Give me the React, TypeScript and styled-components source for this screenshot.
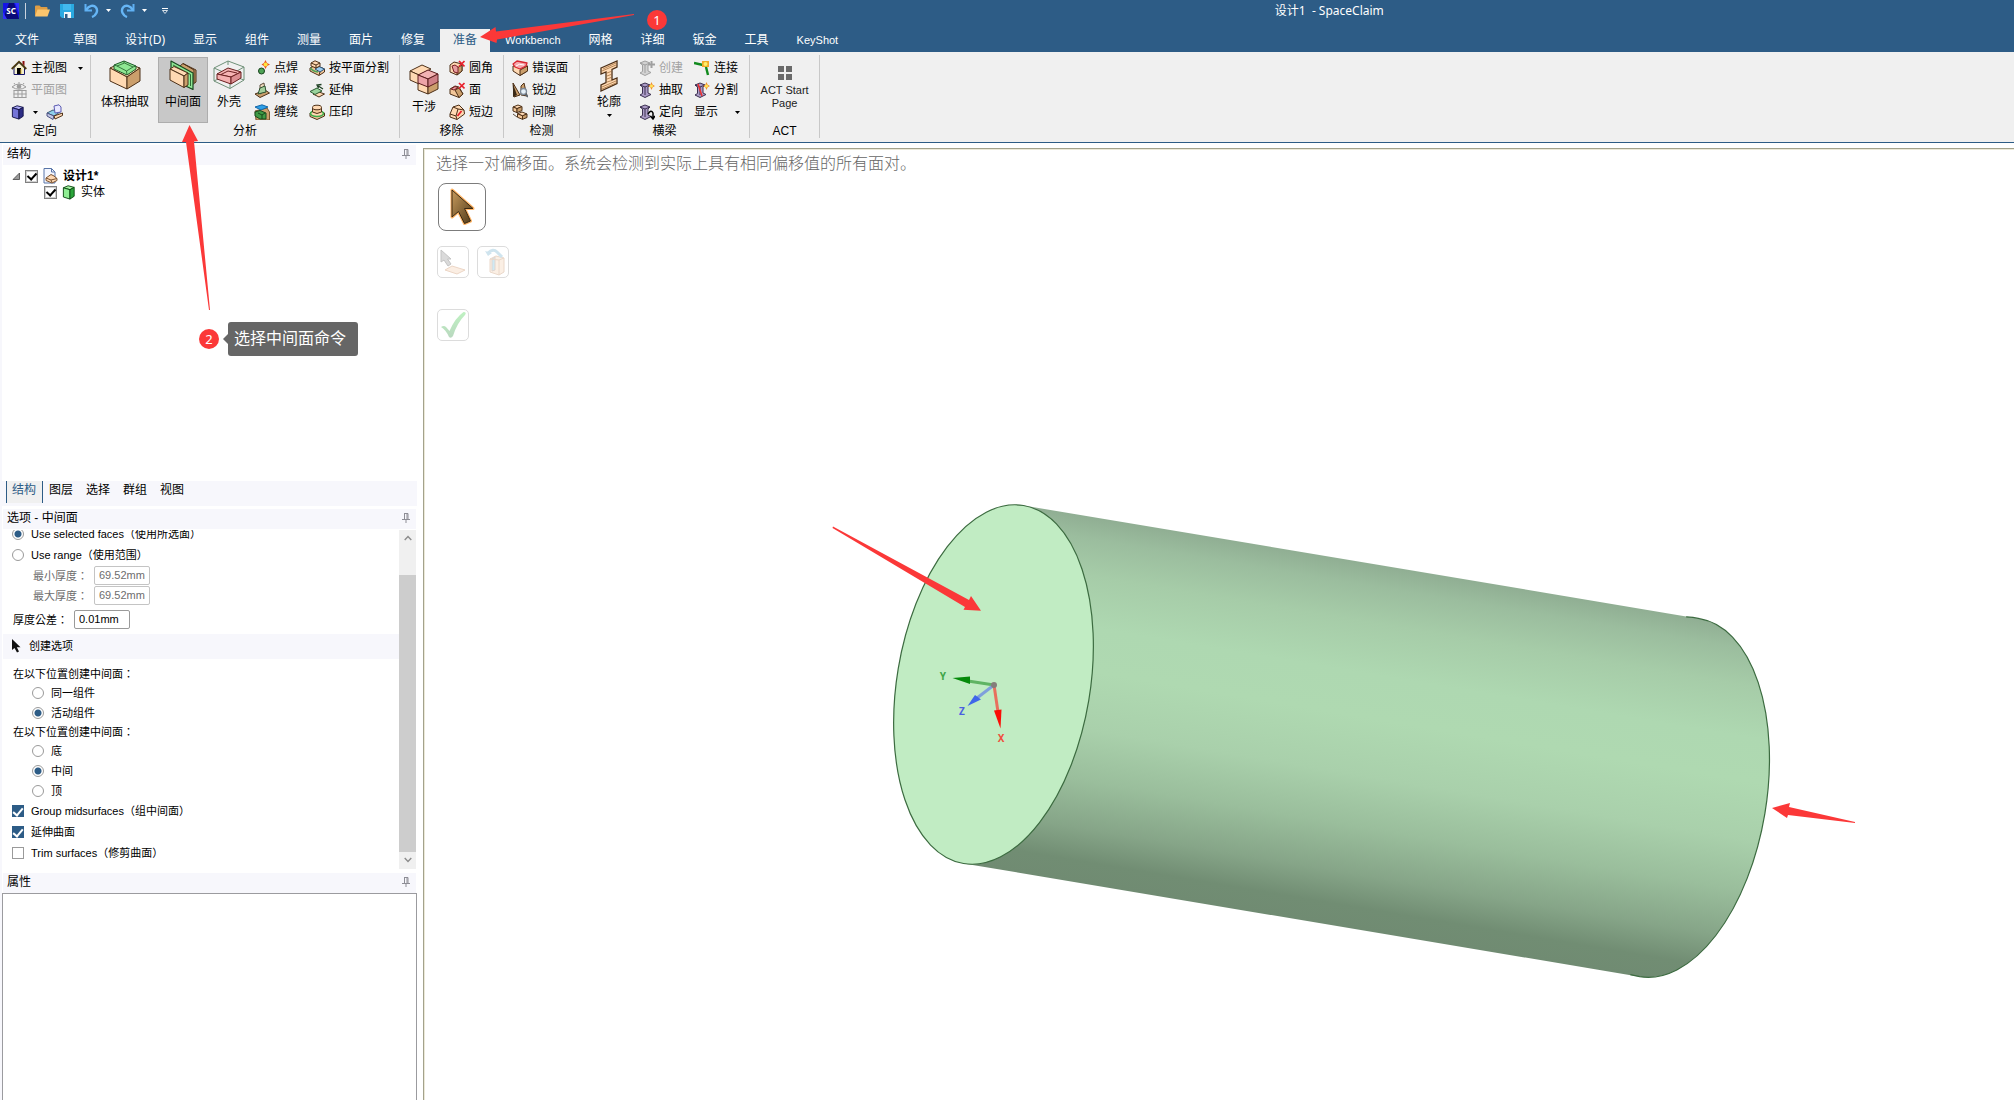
import React from "react";
import styled, { createGlobalStyle, css } from "styled-components";

const BLUE = "#2d5c86";
const LAVENDER = "#f7f7fc";
const RED = "#fb3838";
const SANS = `"Liberation Sans", "Noto Sans CJK SC", sans-serif`;
const HUMAN = `"Noto Sans", "Noto Sans CJK SC", sans-serif`;

const GlobalStyle = createGlobalStyle`
  * { box-sizing: border-box; }
  body { margin: 0; background: #fff; color: #000; font: 12px/16px ${SANS}; overflow: hidden; }
  button, input { font: inherit; color: inherit; }
`;

/* ---------- shell ---------- */

const Shell = styled.div`
  display: flex;
  flex-direction: column;
  height: 100vh;
  position: relative;
`;

const plainButton = css`
  display: flex;
  align-items: center;
  border: 0;
  margin: 0;
  padding: 0;
  background: none;
  white-space: nowrap;
`;

const TitleBar = styled.header`
  display: flex;
  align-items: center;
  height: 22px;
  padding: 0 3px 1px;
  background: ${BLUE};
  color: #fff;
`;

const QuickButton = styled.button<{ $gap?: number }>`
  ${plainButton}
  margin-left: ${(p) => p.$gap ?? 0}px;
`;

const QuickDivider = styled.span`
  width: 1px;
  height: 16px;
  margin-left: 6px;
  background: #c9d3de;
`;

const Spacer = styled.span<{ $grow: number }>`
  flex: ${(p) => p.$grow} 1 0;
`;

const WindowTitle = styled.h1`
  margin: 0;
  font: 12px/16px ${HUMAN};
  white-space: pre;
`;

const TabBar = styled.nav`
  display: flex;
  align-items: flex-end;
  gap: 2px;
  height: 30px;
  background: ${BLUE};
`;

const Tab = styled.button<{ $active?: boolean; $latin?: boolean; $file?: boolean }>`
  ${plainButton}
  height: 23px;
  padding: 0 ${(p) => (p.$file ? 19 : 13)}px 2px ${(p) => (p.$file ? 15 : 13)}px;
  font: ${(p) => (p.$latin ? `11px/16px ${SANS}` : `12px/16px ${HUMAN}`)};
  color: ${(p) => (p.$active ? BLUE : "#fff")};
  background: ${(p) => (p.$active ? "#f0f0f0" : "transparent")};
`;

/* ---------- ribbon ---------- */

const Ribbon = styled.section`
  display: flex;
  height: 91px;
  padding: 3px 0 4px;
  background: #f0f0f0;
  border-bottom: 1px solid ${BLUE};
`;

const Group = styled.div<{ $pad: string }>`
  display: flex;
  flex-direction: column;
  justify-content: space-between;
  border-right: 1px solid #c8c8c8;
  padding: 2px 0 0;
  & > div { padding: ${(p) => p.$pad}; }
`;

const GroupBody = styled.div`
  display: flex;
`;

const GroupLabel = styled.span`
  height: 14px;
  line-height: 14px;
  text-align: center;
`;

const Column = styled.div<{ $ml?: number }>`
  display: flex;
  flex-direction: column;
  margin-left: ${(p) => p.$ml ?? 0}px;
`;

const SmallButton = styled.button`
  ${plainButton}
  height: 22px;
  gap: 4px;
  &:disabled { color: #a3a3a3; }
`;

const SmallRow = styled.div`
  display: flex;
  align-items: center;
  gap: 8px;
`;

const BigButton = styled.button<{ $w: number; $active?: boolean; $top?: number }>`
  ${plainButton}
  flex-direction: column;
  width: ${(p) => p.$w}px;
  height: 66px;
  padding-top: ${(p) => p.$top ?? 2}px;
  border: 1px solid ${(p) => (p.$active ? "#adadad" : "transparent")};
  background: ${(p) => (p.$active ? "#c8c8c8" : "transparent")};
  gap: 4px;
`;

const ActText = styled.span`
  font-size: 11px;
  line-height: 13px;
  white-space: pre-line;
  color: #222;
`;

/* ---------- side panels ---------- */

const Body = styled.main`
  display: flex;
  flex: 1;
  min-height: 0;
`;

const Sidebar = styled.aside`
  display: flex;
  flex-direction: column;
  width: 417px;
  flex: none;
  padding: 2px 0 0 2px;
  background: linear-gradient(to right, ${LAVENDER} 2px, #fff 2px);
`;

const PanelHeader = styled.h2`
  display: flex;
  align-items: center;
  justify-content: space-between;
  flex: none;
  height: 20px;
  margin: 0 1px;
  padding: 0 6px 2px 4px;
  font-size: 12px;
  font-weight: 400;
  background: ${LAVENDER};
`;

const Tree = styled.ul`
  flex: 314 1 0;
  min-height: 0;
  margin: 0;
  padding: 3px 0 0 10px;
  list-style: none;
`;

const TreeRow = styled.li<{ $depth: number }>`
  display: flex;
  align-items: center;
  gap: 5px;
  height: 16px;
  padding-left: ${(p) => p.$depth * 32}px;
  font-weight: ${(p) => (p.$depth ? 400 : 700)};
`;

const TreeLabel = styled.label`
  display: flex;
  align-items: center;
  gap: 5px;
`;

const TreeCheck = styled.input`
  appearance: none;
  display: grid;
  place-items: center;
  width: 13px;
  height: 13px;
  margin: 0;
  border: 1px solid #808080;
  outline: 1px solid #d0d0d0;
  outline-offset: -2px;
  background: #fff;
  &:checked::after {
    content: "";
    width: 4px;
    height: 7px;
    margin-bottom: 2px;
    border: solid #000;
    border-width: 0 2px 2px 0;
    transform: rotate(42deg);
  }
`;

const SideTabs = styled.nav`
  display: flex;
  flex: none;
  height: 25px;
  margin-bottom: 3px;
  padding: 0 0 3px 4px;
  background: ${LAVENDER};
`;

const SideTab = styled.button<{ $active?: boolean }>`
  ${plainButton}
  padding: 0 ${(p) => (p.$active ? 6 : 7)}px 3px ${(p) => (p.$active ? 5 : 6)}px;
  ${(p) =>
    p.$active &&
    css`
      color: ${BLUE};
      background: #f0f0f0;
      border: solid ${BLUE};
      border-width: 0 1px;
    `}
`;

const OptionsPane = styled.div`
  display: flex;
  flex: 341 1 0;
  min-height: 0;
  margin: 1px 1px 4px;
  overflow: hidden;
`;

const OptionsList = styled.form`
  flex: 1;
  margin-top: -6px;
  font: 11px/16px "Liberation Sans", "Noto Sans CJK TC", sans-serif;
`;

const Choice = styled.label<{ $left: number; $h: number }>`
  display: flex;
  align-items: center;
  gap: 7px;
  height: ${(p) => p.$h}px;
  padding-left: ${(p) => p.$left}px;
`;

const Radio = styled.input`
  appearance: none;
  width: 12px;
  height: 12px;
  margin: 0;
  border: 1px solid #9a9a9a;
  border-radius: 50%;
  background: #fff;
  &:checked { background: radial-gradient(circle, ${BLUE} 3px, #fff 4px); }
`;

const Check = styled.input`
  appearance: none;
  display: grid;
  place-items: center;
  width: 12px;
  height: 12px;
  margin: 0;
  border: 1px solid #9a9a9a;
  background: #fff;
  &:checked { background: ${BLUE}; border-color: ${BLUE}; }
  &:checked::after {
    content: "";
    width: 4px;
    height: 8px;
    margin-bottom: 2px;
    border: solid #fff;
    border-width: 0 2px 2px 0;
    transform: rotate(40deg);
  }
`;

const Field = styled.label<{ $left: number; $h: number; $muted?: boolean }>`
  display: flex;
  align-items: center;
  gap: 6px;
  height: ${(p) => p.$h}px;
  padding-left: ${(p) => p.$left}px;
  color: ${(p) => (p.$muted ? "#6d6d6d" : "#000")};
`;

const TextBox = styled.input`
  width: 56px;
  height: 19px;
  padding: 0 4px 1px;
  border: 1px solid #9a9a9a;
  border-radius: 2px;
  background: #fff;
  &:disabled { border-color: #c4c4c4; color: #6d6d6d; }
`;

const SectionTitle = styled.h3`
  display: flex;
  align-items: center;
  gap: 8px;
  height: 25px;
  margin: 0 0 6px;
  padding-left: 8px;
  font: inherit;
  background: ${LAVENDER};
`;

const Caption = styled.p`
  height: 18px;
  margin: 0;
  padding-left: 10px;
  line-height: 18px;
`;

const ScrollTrack = styled.div`
  display: flex;
  flex-direction: column;
  width: 17px;
  background: #f0f0f0;
`;

const ScrollArrow = styled.button`
  ${plainButton}
  justify-content: center;
  height: 17px;
`;

const ScrollThumb = styled.div`
  flex: 1;
  margin-top: 28px;
  background: #cdcdcd;
`;

const Properties = styled.div`
  flex: 207 1 0;
  border: 1px solid #9b9b9f;
  border-bottom: 0;
`;

/* ---------- viewport ---------- */

const Viewport = styled.section`
  position: relative;
  flex: 1;
  min-width: 0;
  margin: 5px 0 0 6px;
  padding: 4px 12px;
  border: 1px solid #a3a28c;
  border-width: 1px 0 0 1px;
  box-shadow: inset 1px 1px 0 #ece9d8;
  overflow: hidden;
`;

const Scene = styled.svg`
  position: absolute;
  top: 0;
  left: 0;
`;

const Hint = styled.p`
  margin: 0;
  color: #666;
  font-size: 16px;
  font-weight: 300;
  line-height: 22px;
`;

const Tools = styled.div`
  display: flex;
  flex-direction: column;
  align-items: flex-start;
  padding: 8px 0 0 1px;
`;

const ToolRow = styled.div`
  display: flex;
  gap: 8px;
  margin: 15px 0 16px;
`;

const Tool = styled.button<{ $large?: boolean }>`
  ${plainButton}
  justify-content: center;
  width: ${(p) => (p.$large ? 48 : 32)}px;
  height: ${(p) => (p.$large ? 48 : 32)}px;
  margin-left: ${(p) => (p.$large ? 1 : 0)}px;
  border: 1px solid ${(p) => (p.$large ? "#7c7c7c" : "#dcdcdc")};
  border-radius: ${(p) => (p.$large ? 8 : 5)}px;
  background: #fff;
`;

/* ---------- annotations ---------- */

const Overlay = styled.svg`
  position: absolute;
  top: 0;
  left: 0;
  pointer-events: none;
`;

const Badge = styled.span<{ $x: number; $y: number }>`
  position: absolute;
  left: ${(p) => p.$x}px;
  top: ${(p) => p.$y}px;
  width: 20px;
  height: 20px;
  border-radius: 50%;
  background: ${RED};
  color: #fff;
  font: 13px/20px ${HUMAN};
  text-align: center;
`;

const Callout = styled.div`
  position: absolute;
  left: 228px;
  top: 322px;
  padding: 0 12px 0 6px;
  border-radius: 3px;
  background: #666;
  color: #fff;
  font-size: 16px;
  line-height: 34px;
  &::before {
    content: "";
    position: absolute;
    left: -5px;
    top: 12px;
    border: solid transparent;
    border-width: 5px 5px 5px 0;
    border-right-color: #666;
  }
`;

/* ---------- drawings ---------- */

const LIGHT = "#ffd9b3";
const MID = "#f3c799";
const DARK = "#cb9f6c";
const LINE = "#4d3018";
const GREEN = "#8fe793";

type IconProps = { w?: number; h?: number; vb?: string; children: React.ReactNode };
const Icon = ({ w = 16, h = 16, vb, children }: IconProps) => (
  <svg width={w} height={h} viewBox={vb ?? `0 0 ${w} ${h}`} aria-hidden="true">
    {children}
  </svg>
);

type PolyProps = { p: string; f?: string; s?: string; w?: number };
const Poly = ({ p, f = "none", s = LINE, w = 1 }: PolyProps) => (
  <polygon points={p} fill={f} stroke={s} strokeWidth={w} strokeLinejoin="round" />
);

type BoxProps = {
  x: number; y: number; a: number; b: number; h: number;
  k?: number; t?: string; l?: string; r?: string; s?: string; w?: number;
};
/* Isometric block: (x, y) is the far corner, a and b the runs to the left and the right. */
const Box = ({ x, y, a, b, h, k = 0.5, t = LIGHT, l = MID, r = DARK, s = LINE, w = 1 }: BoxProps) => {
  const L = [x - a, y + a * k];
  const R = [x + b, y + b * k];
  const N = [x + b - a, y + (a + b) * k];
  return (
    <>
      <Poly p={`${x},${y} ${R} ${N} ${L}`} f={t} s={s} w={w} />
      <Poly p={`${L} ${N} ${N[0]},${N[1] + h} ${L[0]},${L[1] + h}`} f={l} s={s} w={w} />
      <Poly p={`${N} ${R} ${R[0]},${R[1] + h} ${N[0]},${N[1] + h}`} f={r} s={s} w={w} />
    </>
  );
};

const Caret = ({ color = "#000" }: { color?: string }) => (
  <svg width="5" height="3" viewBox="0 0 5 3" aria-hidden="true">
    <path d="M0 0H5L2.500 3Z" fill={color} />
  </svg>
);

const Pin = () => (
  <Icon w={8} h={10}>
    <path d="M2 .5H6V6M2.500 .5V6M5 .5V6M0 6.500H8M4 7V10" stroke="#8d8d95" fill="none" />
  </Icon>
);

const AppLogo = () => (
  <svg width="16" height="16" viewBox="0 0 16 16" role="img" aria-label="SC">
    <rect width="16" height="16" fill="#1414e6" />
    <path d="M6 0H11L16 16H0Z" fill="#0a0a78" />
    <path d="M0 9L4 16H0ZM12 0H16V10Z" fill="#3030ff" />
    <text x="8" y="11" fontSize="8" fontWeight="700" fill="#fff" textAnchor="middle" fontFamily="Noto Sans, sans-serif">SC</text>
  </svg>
);

const FolderIcon = () => (
  <Icon>
    <path d="M1 13V3.500Q1 2.500 2 2.500H5.500L7 4H12.500Q13.500 4 13.500 5V7" fill="#dd9d45" />
    <path d="M1 13.500L3.500 6.500H16L13.500 13.500Z" fill="#fbc56d" />
  </Icon>
);
const SaveIcon = () => (
  <Icon w={14} h={14}>
    <path d="M0 0H14V14H2L0 12Z" fill="#29a9e1" />
    <path d="M3 0H11V6H3Z" fill="#42b9ee" />
    <path d="M4 8H11V14H4Z" fill="#eef6fa" />
    <path d="M5 10H7.500V14H5Z" fill="#2d5c86" />
  </Icon>
);
const UndoIcon = ({ flip }: { flip?: boolean }) => (
  <Icon w={15} h={15}>
    <g transform={flip ? "translate(15 0) scale(-1 1)" : undefined}>
      <path d="M1.500 1V7.500H8" fill="none" stroke="#5fb0f3" strokeWidth="2" />
      <path d="M2 7C5 2.500 9.500 1.500 12 4.500C14.500 8 12 12.500 8 14" fill="none" stroke="#66b6f6" strokeWidth="2.400" />
    </g>
  </Icon>
);

const HomeIcon = () => (
  <Icon>
    <path d="M3 7.500V14.500H13.500V7.500L8 2.500Z" fill="#f4f0d0" stroke="#14146a" />
    <path d="M11.500 1H13.500V6L11.500 4Z" fill="#8a1010" />
    <path d="M.7 9L8 1.700L15.300 9" fill="none" stroke="#4a3a10" strokeWidth="1.800" />
    <path d="M6 8H10V14H6Z" fill="#000" />
    <path d="M10 14V9" stroke="#e8c040" />
  </Icon>
);
const PlanIcon = () => (
  <Icon>
    <path d="M1 5Q8 -1 15 5Q8 9.500 1 5Z" fill="none" stroke="#9c9c9c" />
    <circle cx="8" cy="4.500" r="2.300" fill="#9c9c9c" />
    <path d="M2.500 8.500H15.500M2.500 12H15.500M2.500 15.500H15.500M3 8.500V15.500M7 8.500V15.500M11 8.500V15.500M15 8.500V15.500M3 1L4 2.500M8 0V1.500M13 1L12 2.500" stroke="#9c9c9c" fill="none" />
  </Icon>
);
const CubeIcon = ({ colors }: { colors: [string, string, string, string] }) => (
  <Icon w={14} h={15} vb="0 0 14 16">
    <Poly p="1,3 6,.8 12.500,2.500 8,5" f={colors[0]} s={colors[3]} />
    <Poly p="1,3 8,5 8,15 1,12.800" f={colors[1]} s={colors[3]} />
    <Poly p="8,5 12.500,2.500 12.500,12 8,15" f={colors[2]} s={colors[3]} />
  </Icon>
);
const SketchPageIcon = () => (
  <Icon w={18} h={16}>
    <Poly p="1,9 7,6 14,8 8,12" f="#8fd0ea" s="#3f5a78" />
    <Poly p="1,9 8,12 7,15.500 1,12" f="#c3c8e6" s="#4b5080" />
    <Poly p="8,12 16.500,9 16.500,11.500 9,15" f={LIGHT} s={LINE} />
    <Poly p="8,2 13,.8 15,3 15,8 9,9" f="#e8e8ff" s="#5a5ab0" />
  </Icon>
);

const VolumeIcon = () => (
  <Icon w={32} h={30}>
    <Poly p="1,8 14,2 31,8 18,17" f={LIGHT} />
    <Poly p="1,8 18,17 18,29 1,21" f={LIGHT} />
    <Poly p="18,17 31,8 31,21 18,29" f={DARK} />
    <Poly p="5,5 15,1 27,6 27,9 18,15 5,9" f={GREEN} s="#1f5a2a" />
    <path d="M8 6L15.500 3L24 7L17.500 11ZM5 5L8 6M17.500 11L18 15M24 7L27 6M15 1V3" fill="none" stroke="#1f5a2a" strokeWidth=".8" />
  </Icon>
);
const MidIcon = () => (
  <Icon w={28} h={30}>
    <Poly p="11,6 14,3.500 27,10 27,22 23,25 11,18" f={DARK} />
    <path d="M14 3.500L25 10V23" fill="none" stroke={LINE} />
    <Poly p="2,1 24,13 24,29.500 2,19" f={GREEN} s="#184a20" w={1.2} />
    <path d="M4 5L21.500 14.500V26" fill="none" stroke="#184a20" strokeWidth=".8" />
    <Poly p="1,9 5,6.500 19,13 15,16" f={LIGHT} />
    <Poly p="1,9 15,16 15,27.500 1,20" f={LIGHT} />
    <Poly p="15,16 19,13 19,25 15,27.500" f={DARK} />
  </Icon>
);
const ShellIcon = () => (
  <Icon w={32} h={30}>
    <path d="M1 8L15 1L31 7L17 15ZM1 8V21L17 28.500V15M17 28.500L31 20V7M15 1V5M15 14L1 21M15 14L31 20" fill="none" stroke="#6f9078" />
    <Poly p="4,14 15,8 28,12 18,17" f="#f6b4b4" s="#6a2020" />
    <Poly p="4,14 18,17 18,24 4,19" f="#f4b0b0" s="#6a2020" />
    <Poly p="18,17 28,12 28,18 18,24" f="#dc8f92" s="#6a2020" />
    <path d="M8 14.500L15 11L24 13" fill="none" stroke="#6a2020" />
  </Icon>
);
const SpotWeldIcon = () => (
  <Icon>
    <path d="M11.500 0L13 3L16 4.500L13 6L11.500 9L10 6L7.500 4.500L10 3Z" fill="#e8501c" />
    <circle cx="11.600" cy="4.500" r="2" fill="#ffe23a" />
    <circle cx="7.500" cy="11" r="3" fill="#4ea356" stroke="#17401c" />
  </Icon>
);
const WeldIcon = () => (
  <Icon>
    <Poly p="1,12 11,8 15.500,11 6,15.500" f={DARK} />
    <Poly p="6,3 10,1 11,9 6,12" f="#f2ddc0" s="#5a4a3a" />
    <Poly p="4,12 6,6 11,4 12,10" f="#a3cf9c" s="#2c5030" />
  </Icon>
);
const WrapIcon = () => (
  <Icon>
    <Poly p="1,7 13,4 15.500,8 15.500,16 2,16" f={DARK} s="#7a5730" />
    <Poly p="1,3 8,.8 14,3 7,6" f="#2da0e8" s="#1567a8" />
    <Poly p="1,8 6,6.500 12,9 12,15 6,15 1,12" f="#3f9a45" s="#174a1c" />
    <path d="M4 9L8 11V15M8 11L11 9" fill="none" stroke="#174a1c" />
  </Icon>
);
const SplitPlaneIcon = () => (
  <Icon>
    <Poly p="1,8 7,5 15.500,9 15.500,12 10,15.500 1,11" f={MID} />
    <Poly p="6,9 10,6.500 15.500,9 11,12" f="#9bcbf0" s="#2a5276" />
    <Poly p="2,3 6,.8 11,3 11,6 7,8 2,6" f={LIGHT} />
    <path d="M2 3L7 5L11 3M7 5V8M11 12L10 15" fill="none" stroke={LINE} />
    <path d="M1.500 8Q4 11.500 9 12" fill="none" stroke="#4ea356" strokeWidth="1.500" />
  </Icon>
);
const ExtendIcon = () => (
  <Icon>
    <Poly p="4,12 10,10 15.500,12 10,15" f={LIGHT} />
    <Poly p="1,9.500 8,6 13,9 6,12.500" f="#9ad39c" s="#2d5a32" />
    <path d="M14 7L8.500 3.500M12.500 2.500L8 3L9.500 6" fill="none" stroke="#1f4024" strokeWidth="1.300" />
  </Icon>
);
const ImprintIcon = () => (
  <Icon>
    <Poly p="1,9 8,6 15.500,9 15.500,12 8,15.500 1,12.500" f={MID} />
    <ellipse cx="8" cy="9.500" rx="6.500" ry="3" fill={LIGHT} stroke="#3cab48" strokeWidth="1.600" />
    <path d="M3.500 4V8Q8 11 12.500 8V4Z" fill={MID} stroke={LINE} />
    <ellipse cx="8" cy="3.500" rx="4.500" ry="2.300" fill={LIGHT} stroke={LINE} />
  </Icon>
);
const InterfereIcon = () => (
  <Icon w={30} h={31}>
    <Poly p="9,17 19,21 19,30 9,26" f={LIGHT} />
    <Poly p="19,21 29,17 29,25 19,30" f={DARK} />
    <Poly p="1,7 13,1 22,5 10,11" f={LIGHT} />
    <Poly p="1,7 10,11 10,20 1,16" f={LIGHT} />
    <Poly p="9,11 19,6 29,10 19,15" f="#f2b3b3" s="#5a1d1d" />
    <Poly p="9,11 19,15 19,23 9,19" f="#eda4a8" s="#5a1d1d" />
    <Poly p="19,15 29,10 29,18 19,23" f="#cf8087" s="#5a1d1d" />
  </Icon>
);
const RedCross = ({ x = 10, y = 1 }: { x?: number; y?: number }) => (
  <path d={`M${x} ${y}l5.500 5.500m0 -5.500l-5.500 5.500`} stroke="#e8202c" strokeWidth="1.700" />
);
const RoundIcon = () => (
  <Icon>
    <Poly p="1,5 5,2 13,4 13,11 8,15 1,12" f={LIGHT} />
    <Poly p="8,8 13,5 13,11 8,15" f={DARK} />
    <Poly p="3,6 6,5 9,7 9,13 5,12" f="#e79da0" s="#7a2024" />
    <RedCross />
  </Icon>
);
const FaceIcon = () => (
  <Icon>
    <Poly p="1,7 6,4 10,5 14,12 10,15.500 1,12" f={MID} />
    <Poly p="6,8 10,6 14,12 10,15.500" f={DARK} />
    <Poly p="2,7 6,4.500 9,5.500 5,8" f="#e79da0" s="#7a2024" />
    <RedCross />
  </Icon>
);
const ShortEdgeIcon = () => (
  <Icon>
    <Poly p="1,10 4,3 10,1 15,6 15.500,10 8,15.500 1,13" f={LIGHT} />
    <path d="M4 3L9 5L15 6M9 5L7 12L1 10M7 12L8 15.500" fill="none" stroke={LINE} />
    <path d="M12.500 7L8.500 12" stroke="#e8202c" strokeWidth="1.800" />
  </Icon>
);
const BadFaceIcon = () => (
  <Icon>
    <Poly p="1,6 15.500,6 15.500,11 8,15.500 1,11" f={LIGHT} />
    <Poly p="8,10 15.500,6 15.500,11 8,15.500" f={DARK} />
    <Poly p="1,4 5,1 15,3 14,6 8,9 3,7" f="#f5a9ad" s="#d8252f" w={1.3} />
    <path d="M4 6Q7 3 12 5" fill="none" stroke="#fff" />
  </Icon>
);
const SharpIcon = () => (
  <Icon>
    <path d="M1 1L8 13L2 15ZM9 4L12 1L15 14L9 13Z" fill={DARK} stroke={LINE} />
    <path d="M1 2V15L5 13Z" fill="#3a2a18" />
    <circle cx="11.500" cy="9.500" r="3" fill="#e6f0f8" stroke="#7e8a98" strokeWidth="1.300" />
    <path d="M13.500 12L16 15" stroke="#5a6470" strokeWidth="1.800" />
  </Icon>
);
const GapIcon = () => (
  <Icon>
    <Box x={6} y={1} a={5} b={4} h={4} k={0.4} />
    <Box x={10} y={8} a={4.5} b={5} h={3.5} k={0.4} />
    <path d="M1 10L5 13" stroke="#5a4a3a" />
  </Icon>
);
const ProfileIcon = () => (
  <Icon w={20} h={32}>
    <path d="M2 8L18 1V7L13 9.500V20L18 18V23.500L2 31V25L7 22.500V12L2 14Z" fill={LIGHT} stroke={LINE} strokeWidth="1.300" />
    <path d="M3 11L17 5M4 9L17 3M8 13L12 11.500M8 16L12 14.500M8 19L12 17.500M8 22L13 20.500M3 27L17 21M3 29L17 23" stroke="#a3713f" strokeWidth=".8" fill="none" />
  </Icon>
);
const BeamIcon = ({ grey, mark }: { grey?: boolean; mark?: React.ReactNode }) => (
  <Icon>
    <path
      d="M1 3L6 1L11 3L9 5V11L12 12.500L6 15.500L1 13L3.500 11.500V5Z"
      fill={grey ? "#d2d2d2" : "#ab9bc6"}
      stroke={grey ? "#a0a0a0" : "#3c3050"}
    />
    <path d="M1 3L6 5L11 3M6 5V13" fill="none" stroke={grey ? "#a0a0a0" : "#3c3050"} />
    {mark}
  </Icon>
);
const Spark = () => (
  <>
    <path d="M12.500 0L13.700 2.800L16 4L13.700 5.200L12.500 8L11.300 5.200L9 4L11.300 2.800Z" fill="#f0902c" />
    <circle cx="12.500" cy="4" r="1.600" fill="#ffe45a" />
  </>
);
const JoinIcon = () => (
  <Icon>
    <path d="M0 3L9 5M12 7L14 15" stroke="#118a1e" strokeWidth="2.400" />
    <path d="M8 1H15V7H8Z" fill="#f2a92a" />
    <circle cx="11.500" cy="4" r="2" fill="#fff06a" />
  </Icon>
);
const ActIcon = () => (
  <Icon w={14} h={14}>
    <path d="M0 0H6V6H0ZM8 0H14V6H8ZM0 8H6V14H0ZM8 8H14V14H8Z" fill="#6a6a6a" />
  </Icon>
);
const DesignIcon = () => (
  <Icon w={15} h={16}>
    <path d="M1 .5H8.500L12 4V15H1Z" fill="#f4f7ff" stroke="#5874a8" />
    <path d="M8.500 .5V4H12" fill="none" stroke="#5874a8" />
    <Poly p="3,10 8,6.500 11,8 14,10.500 14,12.500 9,15 3,12.500" f={LIGHT} s="#7a5230" />
    <path d="M3 10L8 12L14 10.500M8 12L9 14.500" fill="none" stroke="#7a5230" />
  </Icon>
);

const CursorTool = () => (
  <Icon w={26} h={38}>
    <defs>
      <linearGradient id="bronze" x1="0" y1="0" x2="1" y2="1">
        <stop offset="0" stopColor="#c79a5c" />
        <stop offset="1" stopColor="#4f3918" />
      </linearGradient>
    </defs>
    <path d="M3 2V29L9.500 23.500L15.500 35.500L21.500 33L15.500 20.500H24Z" fill="none" stroke="#ffb668" strokeWidth="3" strokeLinejoin="round" />
    <path d="M3 2V29L9.500 23.500L15.500 35.500L21.500 33L15.500 20.500H24Z" fill="url(#bronze)" stroke="#3a2812" />
  </Icon>
);
const PickFaceTool = () => (
  <Icon w={26} h={26}>
    <path d="M1 1V13L4 11L8 17L11 15L7.500 10H11Z" fill="#dadada" stroke="#c4c4c4" />
    <Poly p="5,21 12,17 25,21 17,25" f="#fbeee3" s="#ecd6c6" />
  </Icon>
);
const FlipTool = () => (
  <Icon w={26} h={28}>
    <Poly p="10,11 16,8 24,10 24,24 19,27 10,24" f="#fbefe4" s="#ead8ca" />
    <Poly p="12,11 15,9 15,22 12,23" f="#cfe9f4" s="#dfd6d0" />
    <path d="M19 12V27M10 11L19 12L24 10" fill="none" stroke="#ead8ca" />
    <path d="M8 5Q13 0 17 4L22 9" fill="none" stroke="#cfe4ee" strokeWidth="3" />
    <path d="M5 3L8 8L12 5Z" fill="#cfe4ee" />
  </Icon>
);
const DoneTool = () => (
  <Icon w={26} h={28}>
    <defs>
      <linearGradient id="mint" x1="0" y1="1" x2="0" y2="0">
        <stop offset="0" stopColor="#b9d8bf" />
        <stop offset="1" stopColor="#bff2c2" />
      </linearGradient>
    </defs>
    <path d="M1 16Q4 14 6 16L9.500 20Q15 7 23.500 1Q27 1 25 4Q17 12 13 25Q11 28 9 26Q6 19 1 16Z" fill="url(#mint)" />
  </Icon>
);

/* Cylinder, triad and pointer arrows on the modelling canvas. */
const CylinderScene = () => (
  <Scene width="1590" height="951" viewBox="424 149 1590 951" role="img" aria-label="圆柱实体">
    <defs>
      <linearGradient id="barrel" x1="0" y1="0" x2="0" y2="1">
        <stop offset="0" stopColor="#90ae93" />
        <stop offset=".06" stopColor="#9bbd9e" />
        <stop offset=".16" stopColor="#a6cca8" />
        <stop offset=".3" stopColor="#aed8b1" />
        <stop offset=".42" stopColor="#afd9b1" />
        <stop offset=".58" stopColor="#a9d0ab" />
        <stop offset=".72" stopColor="#9abe9c" />
        <stop offset=".85" stopColor="#86a588" />
        <stop offset=".94" stopColor="#718d73" />
        <stop offset="1" stopColor="#708b72" />
      </linearGradient>
    </defs>
    <g transform="translate(993.500 684.500) rotate(9.500)">
      <path d="M0 -181.500H685.500A96.600 181.500 0 0 1 685.500 181.500H0Z" fill="url(#barrel)" />
      <path d="M672 -181A96.600 181.500 0 0 1 685.500 -181.500A96.600 181.500 0 0 1 685.500 181.500L676 181" fill="none" stroke="#3c6b40" strokeWidth="1.200" />
      <ellipse rx="96.600" ry="181.500" fill="#c1ecc3" stroke="#3c6b40" strokeWidth="1.200" />
    </g>
    <g strokeWidth="3">
      <path d="M994 685L968 681" stroke="#5fb463" />
      <path d="M994 685L977 698" stroke="#7f9fdc" />
      <path d="M994 685L998 712" stroke="#e8705e" />
    </g>
    <path d="M952.500 678L970 676.500V684Z" fill="#058a0a" />
    <path d="M967.500 706L975 695L981 699.500Z" fill="#3f66ea" />
    <path d="M1000.500 728.500L994 710.500L1001.500 709.500Z" fill="#fb0d06" />
    <circle cx="994" cy="685" r="3" fill="#847e7a" />
    <g fontFamily="Noto Sans, sans-serif" fontSize="10" fontWeight="700" textAnchor="middle">
      <text x="943" y="680" fill="#3fa648">Y</text>
      <text x="962" y="715" fill="#4a5fe0">Z</text>
      <text x="1001" y="742" fill="#f0503f">X</text>
    </g>
    <g fill={RED}>
      <path d="M833 526.500L969 600L971 596L981 610.700L963.500 609.800L965 607L832.500 528Z" />
      <path d="M1772 808L1790 803L1789 807L1855 822L1855 823L1788 815L1787 818Z" />
    </g>
  </Scene>
);

/* ---------- page ---------- */

const TABS = ["文件", "草图", "设计(D)", "显示", "组件", "测量", "面片", "修复", "准备", "Workbench", "网格", "详细", "钣金", "工具", "KeyShot"];
const SIDE_TABS = ["结构", "图层", "选择", "群组", "视图"];

type Cmd = { icon: React.ReactNode; text: string; disabled?: boolean };
const Commands = ({ items, ml, children }: { items: Cmd[]; ml?: number; children?: React.ReactNode }) => (
  <Column $ml={ml}>
    {items.map((c) => (
      <SmallButton key={c.text} disabled={c.disabled}>
        {c.icon}
        {c.text}
      </SmallButton>
    ))}
    {children}
  </Column>
);

const RibbonGroup = ({ label, pad, children }: { label: string; pad: string; children: React.ReactNode }) => (
  <Group $pad={pad}>
    <GroupBody>{children}</GroupBody>
    <GroupLabel>{label}</GroupLabel>
  </Group>
);

const WideCaretButton = styled(SmallButton)<{ $gap: number }>`
  & > svg:last-child { margin-left: ${(p) => p.$gap}px; }
`;

const ProfileButton = styled(BigButton)`
  gap: 2px;
  & > svg:last-child { margin-top: 2px; }
`;

export default function App() {
  return (
    <Shell>
      <GlobalStyle />
      <TitleBar>
        <AppLogo />
        <QuickDivider />
        <QuickButton $gap={8} aria-label="打开"><FolderIcon /></QuickButton>
        <QuickButton $gap={10} aria-label="保存"><SaveIcon /></QuickButton>
        <QuickButton $gap={10} aria-label="撤销"><UndoIcon /></QuickButton>
        <QuickButton $gap={7} aria-label="撤销列表"><Caret color="#fff" /></QuickButton>
        <QuickButton $gap={9} aria-label="重做"><UndoIcon flip /></QuickButton>
        <QuickButton $gap={7} aria-label="重做列表"><Caret color="#fff" /></QuickButton>
        <QuickButton $gap={15} aria-label="自定义">
          <Icon w={6} h={6}>
            <path d="M0 .5H6" stroke="#fff" />
            <path d="M.5 2.500H5.500L3 5.500Z" fill="none" stroke="#fff" strokeWidth=".8" />
          </Icon>
        </QuickButton>
        <Spacer $grow={30} />
        <WindowTitle>设计1  - SpaceClaim</WindowTitle>
        <Spacer $grow={17} />
      </TitleBar>

      <TabBar>
        {TABS.map((t) => (
          <Tab key={t} $file={t === "文件"} $active={t === "准备"} $latin={/^[A-Z]/.test(t)}>{t}</Tab>
        ))}
      </TabBar>

      <Ribbon>
        <RibbonGroup label="定向" pad="0 7px 0 11px">
          <Column>
            <WideCaretButton $gap={7}><HomeIcon />主视图<Caret /></WideCaretButton>
            <SmallButton disabled><PlanIcon />平面图</SmallButton>
            <SmallRow>
              <SmallButton aria-label="视图方向">
                <CubeIcon colors={["#a9a9f4", "#7474d8", "#2d2d86", "#14144a"]} />
              </SmallButton>
              <SmallButton aria-label="更多方向"><Caret /></SmallButton>
              <SmallButton aria-label="草图平面"><SketchPageIcon /></SmallButton>
            </SmallRow>
          </Column>
        </RibbonGroup>

        <RibbonGroup label="分析" pad="0 10px 0 1px">
          <BigButton $w={66}><VolumeIcon />体积抽取</BigButton>
          <BigButton $w={50} $active><MidIcon />中间面</BigButton>
          <BigButton $w={42}><ShellIcon />外壳</BigButton>
          <Commands
            ml={4}
            items={[
              { icon: <SpotWeldIcon />, text: "点焊" },
              { icon: <WeldIcon />, text: "焊接" },
              { icon: <WrapIcon />, text: "缠绕" },
            ]}
          />
          <Commands
            ml={11}
            items={[
              { icon: <SplitPlaneIcon />, text: "按平面分割" },
              { icon: <ExtendIcon />, text: "延伸" },
              { icon: <ImprintIcon />, text: "压印" },
            ]}
          />
        </RibbonGroup>

        <RibbonGroup label="移除" pad="0 10px 0 3px">
          <BigButton $w={42} $top={6}><InterfereIcon />干涉</BigButton>
          <Commands
            ml={4}
            items={[
              { icon: <RoundIcon />, text: "圆角" },
              { icon: <FaceIcon />, text: "面" },
              { icon: <ShortEdgeIcon />, text: "短边" },
            ]}
          />
        </RibbonGroup>

        <RibbonGroup label="检测" pad="0 11px 0 8px">
          <Commands
            items={[
              { icon: <BadFaceIcon />, text: "错误面" },
              { icon: <SharpIcon />, text: "锐边" },
              { icon: <GapIcon />, text: "间隙" },
            ]}
          />
        </RibbonGroup>

        <RibbonGroup label="横梁" pad="0 9px 0 4px">
          <ProfileButton $w={50} $top={2}><ProfileIcon />轮廓<Caret /></ProfileButton>
          <Commands
            ml={5}
            items={[
              { icon: <BeamIcon grey mark={<path d="M12.500 1V8M9 4.500H16" stroke="#a0a0a0" strokeWidth="2" />} />, text: "创建", disabled: true },
              { icon: <BeamIcon mark={<Spark />} />, text: "抽取" },
              { icon: <BeamIcon mark={<path d="M9 10Q12 5 14 9V14M11.500 12L14 15L16 12" fill="none" stroke="#000" strokeWidth="1.500" />} />, text: "定向" },
            ]}
          />
          <Commands
            ml={11}
            items={[
              { icon: <JoinIcon />, text: "连接" },
              { icon: <BeamIcon mark={<><path d="M4 2L8 14" stroke="#f03030" strokeWidth="1.500" /><Spark /></>} />, text: "分割" },
            ]}
          >
            <WideCaretButton $gap={13}>显示<Caret /></WideCaretButton>
          </Commands>
        </RibbonGroup>

        <RibbonGroup label="ACT" pad="0 3px 0 3px">
          <BigButton $w={63} $top={8}><ActIcon /><ActText>{"ACT Start\nPage"}</ActText></BigButton>
        </RibbonGroup>
      </Ribbon>

      <Body>
        <Sidebar>
          <PanelHeader>结构<Pin /></PanelHeader>
          <Tree>
            <TreeRow $depth={0}>
              <Icon w={8} h={8}><path d="M7.500 1V7.500H1Z" fill="#9a9a9a" stroke="#444" strokeWidth=".8" /></Icon>
              <TreeLabel>
                <TreeCheck type="checkbox" defaultChecked />
                <DesignIcon />
                设计1*
              </TreeLabel>
            </TreeRow>
            <TreeRow $depth={1}>
              <TreeLabel>
                <TreeCheck type="checkbox" defaultChecked />
                <CubeIcon colors={["#a6f2a2", "#8fee93", "#2aa53a", "#0d4a14"]} />
                实体
              </TreeLabel>
            </TreeRow>
          </Tree>
          <SideTabs>
            {SIDE_TABS.map((t, i) => (
              <SideTab key={t} $active={i === 0}>{t}</SideTab>
            ))}
          </SideTabs>

          <PanelHeader>选项 - 中间面<Pin /></PanelHeader>
          <OptionsPane>
            <OptionsList>
              <Choice $left={9} $h={21}><Radio type="radio" name="mode" defaultChecked />Use selected faces（使用所选面）</Choice>
              <Choice $left={9} $h={21}><Radio type="radio" name="mode" />Use range（使用范围）</Choice>
              <Field $left={30} $h={20} $muted>最小厚度：<TextBox disabled defaultValue="69.52mm" /></Field>
              <Field $left={30} $h={20} $muted>最大厚度：<TextBox disabled defaultValue="69.52mm" /></Field>
              <Field $left={10} $h={28}>厚度公差：<TextBox defaultValue="0.01mm" /></Field>
              <SectionTitle>
                <Icon w={10} h={14}><path d="M1 0V11L3.500 9L6 13.500L8 12.500L5.800 8.200H9.500Z" fill="#111" /></Icon>
                创建选项
              </SectionTitle>
              <Caption>在以下位置创建中间面：</Caption>
              <Choice $left={29} $h={20}><Radio type="radio" name="component" />同一组件</Choice>
              <Choice $left={29} $h={20}><Radio type="radio" name="component" defaultChecked />活动组件</Choice>
              <Caption>在以下位置创建中间面：</Caption>
              <Choice $left={29} $h={20}><Radio type="radio" name="place" />底</Choice>
              <Choice $left={29} $h={20}><Radio type="radio" name="place" defaultChecked />中间</Choice>
              <Choice $left={29} $h={20}><Radio type="radio" name="place" />顶</Choice>
              <Choice $left={9} $h={21}><Check type="checkbox" defaultChecked />Group midsurfaces（组中间面）</Choice>
              <Choice $left={9} $h={21}><Check type="checkbox" defaultChecked />延伸曲面</Choice>
              <Choice $left={9} $h={21}><Check type="checkbox" />Trim surfaces（修剪曲面）</Choice>
            </OptionsList>
            <ScrollTrack>
              <ScrollArrow aria-label="向上滚动"><Icon w={8} h={6}><path d="M.7 5L4 1.500L7.300 5" fill="none" stroke="#8c8c8c" strokeWidth="1.400" /></Icon></ScrollArrow>
              <ScrollThumb />
              <ScrollArrow aria-label="向下滚动"><Icon w={8} h={6}><path d="M.7 1L4 4.500L7.300 1" fill="none" stroke="#8c8c8c" strokeWidth="1.400" /></Icon></ScrollArrow>
            </ScrollTrack>
          </OptionsPane>

          <PanelHeader>属性<Pin /></PanelHeader>
          <Properties />
        </Sidebar>

        <Viewport>
          <CylinderScene />
          <Hint>选择一对偏移面。系统会检测到实际上具有相同偏移值的所有面对。</Hint>
          <Tools>
            <Tool $large aria-label="选择面"><CursorTool /></Tool>
            <ToolRow>
              <Tool aria-label="选取面"><PickFaceTool /></Tool>
              <Tool aria-label="翻转"><FlipTool /></Tool>
            </ToolRow>
            <ToolRow>
              <Tool aria-label="完成"><DoneTool /></Tool>
            </ToolRow>
          </Tools>
        </Viewport>
      </Body>

      <Overlay width="700" height="320" aria-hidden="true">
        <g fill={RED}>
          <path d="M480 37L495.500 27L496 31.500L634 14L634 15L497 39.500L496.500 43Z" />
          <path d="M189.500 125L198 141L194 141.500L210 310L209 310L186 142L182 142Z" />
        </g>
      </Overlay>
      <Badge $x={647} $y={10}>1</Badge>
      <Badge $x={199} $y={329}>2</Badge>
      <Callout>选择中间面命令</Callout>
    </Shell>
  );
}
